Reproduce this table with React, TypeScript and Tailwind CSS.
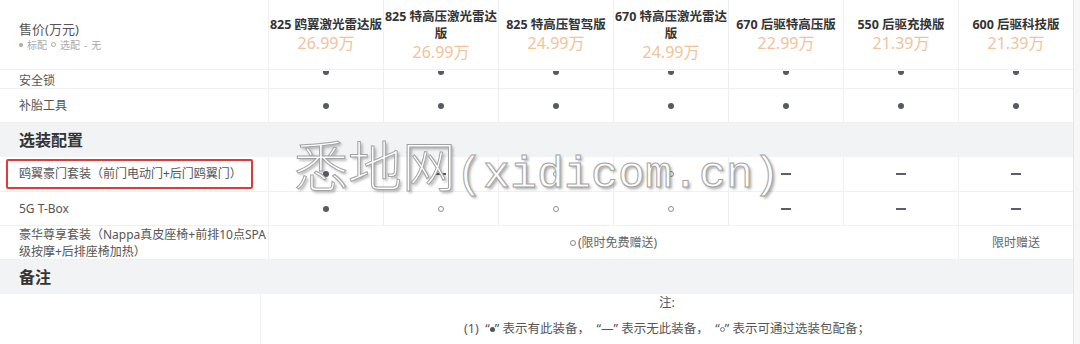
import type { ReactNode } from 'react';

type Mark = 'dot' | 'opt' | 'none';

const MODELS = [
  { name: '825 鸥翼激光雷达版', price: '26.99万' },
  { name: '825 特高压激光雷达版', price: '26.99万' },
  { name: '825 特高压智驾版', price: '24.99万' },
  { name: '670 特高压激光雷达版', price: '24.99万' },
  { name: '670 后驱特高压版', price: '22.99万' },
  { name: '550 后驱充换版', price: '21.39万' },
  { name: '600 后驱科技版', price: '21.39万' },
];

function MarkCell({ m }: { m: Mark }) {
  if (m === 'dot') return <span className="w-[6px] h-[6px] rounded-full bg-[#555a63]" />;
  if (m === 'opt') return <span className="w-[6px] h-[6px] rounded-full border border-[#8a8f98]" />;
  return <span className="w-[10px] h-[2px] bg-[#5a5f68]" />;
}

// small inline glyphs used inside text
const Dot = ({ c = 'bg-[#999]', s = 'w-[5px] h-[5px]' }: { c?: string; s?: string }) => (
  <span className={`inline-block rounded-full align-middle ${s} ${c}`} />
);
const Ring = ({ c = 'border-[#999]', s = 'w-[5px] h-[5px]' }: { c?: string; s?: string }) => (
  <span className={`inline-block rounded-full border align-middle ${s} ${c}`} />
);

function Row({ label, marks, h, children }: { label: ReactNode; marks?: Mark[]; h: string; children?: ReactNode }) {
  return (
    <div className={`grid grid-cols-[268px_repeat(7,115px)] border-b border-[#f0f0f0] ${h}`}>
      <div className="flex items-center pl-[19px] text-[12px] leading-[17px] text-[#555]">{label}</div>
      {marks
        ? marks.map((m, i) => (
            <div key={i} className="flex items-center justify-center border-l border-[#f0f0f0]">
              <MarkCell m={m} />
            </div>
          ))
        : children}
    </div>
  );
}

function Section({ title }: { title: string }) {
  return (
    <div className="h-[34px] bg-[#f2f3f5] flex items-center pl-[19px] text-[16px] font-bold text-[#333]">
      {title}
    </div>
  );
}

export default function App() {
  return (
    <div className="relative w-[1080px] h-[344px] overflow-hidden flex bg-white font-['Noto_Sans','Noto_Sans_CJK_SC',sans-serif]">
      <div className="w-[1073px] shrink-0 bg-white">
        {/* header */}
        <div className="grid grid-cols-[268px_repeat(7,115px)] h-[70px] border-b border-[#f0f0f0]">
          <div className="flex flex-col justify-center pl-[19px] pt-[2px]">
            <div className="text-[13px] leading-[18px] text-[#555]">售价(万元)</div>
            <div className="flex items-center gap-[4px] text-[10px] leading-[14px] text-[#aaa]">
              <Dot c="bg-[#aaa]" s="w-[4px] h-[4px]" />
              <span>标配</span>
              <Ring c="border-[#aaa]" s="w-[5px] h-[5px]" />
              <span>选配</span>
              <span>-</span>
              <span>无</span>
            </div>
          </div>
          {MODELS.map(m => (
            <div key={m.name} className="flex flex-col items-center justify-center border-l border-[#f0f0f0] text-center">
              <div className="text-[12.5px] font-bold leading-[17px] text-[#333]">{m.name}</div>
              <div className="text-[16px] leading-[20px] text-[#f2c29a]">{m.price}</div>
            </div>
          ))}
        </div>

        {/* partially scrolled row */}
        <div className="grid grid-cols-[268px_repeat(7,115px)] h-[19px] border-b border-[#f0f0f0]">
          <div className="flex items-center pl-[19px] pt-[2px] text-[12px] text-[#555]">安全锁</div>
          {MODELS.map(m => (
            <div key={m.name} className="flex justify-center pt-[1px] border-l border-[#f0f0f0]">
              <span className="w-[6px] h-[4px] rounded-b-full bg-[#555a63]" />
            </div>
          ))}
        </div>

        <Row label="补胎工具" h="h-[34px]" marks={['dot', 'dot', 'dot', 'dot', 'dot', 'dot', 'dot']} />

        <Section title="选装配置" />

        <div className="grid grid-cols-[268px_repeat(7,115px)] h-[35px] border-b border-[#f0f0f0]">
          <div className="flex items-center pl-[6px] pr-[15px] py-[2px]">
            <div className="flex items-center w-full h-full border-2 border-[#e03a3a] rounded-[2px] pl-[11px] text-[12px] text-[#555]">
              鸥翼豪门套装（前门电动门+后门鸥翼门）
            </div>
          </div>
          {(['dot', 'none', 'opt', 'opt', 'none', 'none', 'none'] as Mark[]).map((m, i) => (
            <div key={i} className="flex items-center justify-center border-l border-[#f0f0f0]">
              <MarkCell m={m} />
            </div>
          ))}
        </div>

        <Row label="5G T-Box" h="h-[34px]" marks={['dot', 'opt', 'opt', 'opt', 'none', 'none', 'none']} />

        <Row
          h="h-[34px]"
          label={
            <span>
              豪华尊享套装（Nappa真皮座椅+前排10点SPA
              <br />
              级按摩+后排座椅加热）
            </span>
          }
        >
          <div className="col-span-6 flex items-center justify-center gap-[2px] border-l border-[#f0f0f0] text-[12px] text-[#666]">
            <Ring c="border-[#888]" s="w-[6px] h-[6px]" />(限时免费赠送)
          </div>
          <div className="flex items-center justify-center border-l border-[#f0f0f0] text-[12px] text-[#666]">
            限时赠送
          </div>
        </Row>

        <Section title="备注" />

        <div className="grid grid-cols-[260px_1fr] h-[60px]">
          <div />
          <div className="border-l border-[#f0f0f0] flex flex-col items-center pt-[1px] text-[12.5px] leading-[16px] text-[#555]">
            <div>注:</div>
            <div className="mt-[10px] whitespace-nowrap">
              (1) &nbsp;“<Dot c="bg-[#555]" s="w-[5px] h-[5px]" />” 表示有此装备，&nbsp;&nbsp;“—” 表示无此装备，&nbsp;&nbsp;“<Ring c="border-[#777]" s="w-[5px] h-[5px]" />” 表示可通过选装包配备；
            </div>
          </div>
        </div>
      </div>
      <div className="flex-1 bg-[#f7f7f7] border-l border-[#e6e6e6]" />

      {/* watermark overlay */}
      <div className="absolute left-[294px] top-[134px] flex items-baseline text-white [-webkit-text-stroke:1px_#a3a3a3] [text-shadow:2px_2px_3px_rgba(0,0,0,0.35)] pointer-events-none">
        <span className="text-[54px] leading-[60px] font-['Noto_Sans_CJK_SC',serif] font-light">悉地网</span>
        <span className="text-[45px] leading-[60px] font-['Liberation_Mono',monospace]">(xidicom.cn)</span>
      </div>
    </div>
  );
}
